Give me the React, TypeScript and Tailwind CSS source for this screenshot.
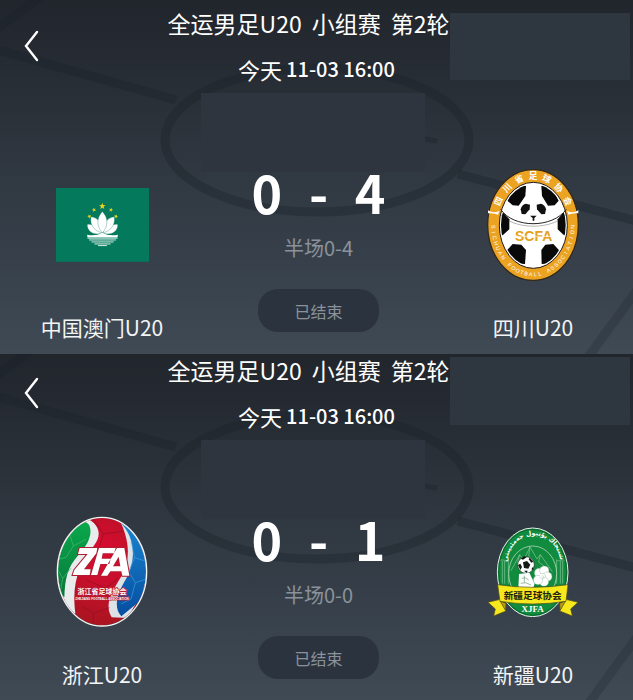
import type { ReactNode } from 'react'

interface Team {
  name: string
  logo: ReactNode
}

interface Match {
  id: string
  home: Team
  away: Team
  score: [number, number]
  half: string
  cropped?: boolean
}

interface RingTextProps {
  text: string
  cx: number
  cy: number
  rx: number
  ry: number
  from: number
  to: number
  size: number
  inward?: boolean
  weight?: number
}

// Places each character on an ellipse, angles in degrees clockwise from the top
function RingText({ text, cx, cy, rx, ry, from, to, size, inward, weight = 400 }: RingTextProps) {
  const chars = [...text]
  return (
    <g fill="#fff" fontSize={size} fontWeight={weight} textAnchor="middle" fontFamily="'Liberation Sans', 'Noto Sans CJK SC', sans-serif">
      {chars.map((char, i) => {
        const deg = from + ((to - from) * i) / (chars.length - 1)
        const rad = (deg * Math.PI) / 180
        const x = cx + rx * Math.sin(rad)
        const y = cy - ry * Math.cos(rad)
        const tilt = (Math.atan2(Math.sin(rad) / rx, Math.cos(rad) / ry) * 180) / Math.PI + (inward ? 180 : 0)
        return (
          <text key={i} transform={`translate(${x} ${y}) rotate(${tilt})`} y={size * 0.36}>
            {char}
          </text>
        )
      })}
    </g>
  )
}

function MacauFlag() {
  const star = 'M0 -9 L2.2 -3 L8.6 -2.8 L3.5 1.2 L5.3 7.3 L0 3.8 L-5.3 7.3 L-3.5 1.2 L-8.6 -2.8 L-2.2 -3Z'
  return (
    <svg viewBox="18 23 281 223" className="w-[93px]" role="img" aria-label="中国澳门">
      <rect x="18" y="23" width="281" height="223" fill="#04795c" />
      <g fill="#e8d21d">
        <path d={star} transform="translate(158 78) scale(1.15)" />
        <path d={star} transform="translate(133 89) rotate(-20) scale(.75)" />
        <path d={star} transform="translate(184 89) rotate(20) scale(.75)" />
        <path d={star} transform="translate(119 109) rotate(-30) scale(.75)" />
        <path d={star} transform="translate(199 109) rotate(30) scale(.75)" />
      </g>
      <g fill="#fff" stroke="#04795c" strokeWidth="1">
        <path d="M112 134 C122 129 142 137 157 159 C139 166 114 161 112 134Z" />
        <path d="M205 134 C195 129 175 137 160 159 C178 166 203 161 205 134Z" />
        <path d="M124 110 C146 112 158 131 157 159 C131 151 119 132 124 110Z" />
        <path d="M194 110 C172 112 160 131 160 159 C186 151 198 132 194 110Z" />
        <path d="M158 94 C178 115 175 139 158 159 C141 139 139 115 158 94Z" />
      </g>
      <path d="M112 164 Q136 170 158 158 Q180 170 205 164 L204 171 H113Z" fill="#fff" />
      <g stroke="#d4eee5" fill="none">
        <path d="M113 174 H204" strokeWidth="4" />
        <path d="M118 180 H199" strokeWidth="3" />
        <path d="M125 186 H192" strokeWidth="3" />
        <path d="M134 192 H183" strokeWidth="3" />
        <path d="M145 197 H172" strokeWidth="3" />
      </g>
    </svg>
  )
}

function SichuanBadge() {
  return (
    <svg viewBox="20 24 282 342" className="w-[94px]" role="img" aria-label="四川省足球协会">
      <defs>
        <clipPath id="scfa-ball">
          <ellipse cx="162" cy="196" rx="97" ry="124" />
        </clipPath>
      </defs>
      <ellipse cx="161" cy="195" rx="136" ry="166" fill="#eca322" stroke="#33291a" strokeWidth="4" />
      <ellipse cx="162" cy="196" rx="102" ry="129" fill="#fff" stroke="#201c1c" strokeWidth="3" />
      <g clipPath="url(#scfa-ball)" fill="#090909">
        <path d="M84 122 L109 76 L140 78 L138 108 L118 137 L100 136Z" />
        <path d="M238 122 L214 76 L186 78 L188 108 L206 137 L226 136Z" />
        <path d="M56 166 L72 158 L90 178 L90 208 L70 226 L58 226Z" />
        <path d="M268 166 L252 158 L235 178 L235 208 L254 226 L268 226Z" />
        <path d="M80 274 L100 252 L126 254 L140 270 L137 312 L100 310Z" />
        <path d="M242 274 L222 252 L198 254 L186 270 L187 312 L224 310Z" />
      </g>
      <g fill="none" stroke="#252222" strokeWidth="3">
        <path d="M64 148 C102 205 219 206 261 148" />
        <path d="M61 160 C99 211 223 212 264 160" strokeWidth="1" />
      </g>
      <path d="M26 151 Q44 162 60 152 L56 164 Q44 158 26 160Z M297 151 Q279 162 263 152 L267 164 Q279 158 297 160Z" fill="#fff" />
      <g fill="#111">
        <path d="M124 148 Q127 134 139 131 L152 134 L151 148 L138 163 L127 162Z" />
        <path d="M200 148 Q197 134 185 131 L172 134 L173 148 L186 163 L197 162Z" />
        <path d="M152 167 H172 L165 174 V182 H160 V174Z" />
      </g>
      <text x="163" y="242" textAnchor="middle" fill="#e7a01d" fontSize="42" fontWeight="700" fontFamily="'Liberation Sans', sans-serif">
        SCFA
      </text>
      <path d="M104 229 H222" stroke="#fff" strokeWidth="2" />
      <RingText text="四川省足球协会" cx={161} cy={195} rx={119} ry={147} from={-61} to={61} size={26} weight={700} />
      <RingText text="SICHUAN FOOTBALL ASSOCIATION" cx={161} cy={195} rx={119} ry={148} from={268} to={92} size={16} inward />
    </svg>
  )
}

function ZhejiangBadge() {
  return (
    <svg viewBox="20 18 276 334" className="w-[92px]" role="img" aria-label="浙江省足球协会">
      <defs>
        <clipPath id="zfa-ball">
          <ellipse cx="158" cy="185" rx="132" ry="161" />
        </clipPath>
        <radialGradient id="zfa-red" cx=".5" cy=".35" r=".65">
          <stop offset="0" stopColor="#dd0b33" />
          <stop offset="1" stopColor="#a81520" />
        </radialGradient>
        <linearGradient id="zfa-green" x1="0" y1="0" x2="0" y2="1">
          <stop offset="0" stopColor="#09a94b" />
          <stop offset="1" stopColor="#08773c" />
        </linearGradient>
        <linearGradient id="zfa-blue" x1="0" y1="0" x2="0" y2="1">
          <stop offset="0" stopColor="#1a86d0" />
          <stop offset="1" stopColor="#064da0" />
        </linearGradient>
      </defs>
      <g clipPath="url(#zfa-ball)">
        <rect x="20" y="18" width="276" height="334" fill="url(#zfa-red)" />
        <path d="M20 18 H100 C150 40 161 72 133 108 C91 164 66 214 78 310 L20 350Z" fill="#e9ecec" />
        <path d="M20 60 C60 40 103 24 119 44 C132 72 115 105 88 134 C54 172 47 205 45 262 L20 240Z" fill="url(#zfa-green)" />
        <path d="M211 30 C235 82 247 133 221 190 C197 235 160 277 187 322 L235 324 L300 210 V70Z" fill="#dde2e7" />
        <path d="M210 34 C262 86 259 153 230 207 C205 249 190 291 216 319 L300 250 V60Z" fill="url(#zfa-blue)" />
        <path d="M60 70 L72 108 L110 88 M72 108 L50 142 L26 148 M26 180 L40 205 L65 175 M40 205 L34 240" fill="none" stroke="#4fba70" strokeWidth="2" />
        <path d="M133 29 L162 72 L220 64 M162 72 L150 110 M112 210 L170 235 L205 205 M98 288 L132 310 L180 293 M132 310 V347" fill="none" stroke="#8f1024" strokeWidth="2" />
        <path d="M246 96 L256 143 L294 155 M256 143 L238 185 L258 218 L292 207 M258 218 L245 267 L215 282" fill="none" stroke="#3f9fdb" strokeWidth="2" />
      </g>
      <ellipse cx="158" cy="185" rx="134" ry="163" fill="none" stroke="#f5f5f5" strokeWidth="4" />
      <path d="M91 114 H144 L141 130 L104 178 H124 L121 195 H70 L75 180 L115 132 H86Z M149 114 H199 L194 130 H160 L157 146 H184 L180 162 H153 L144 195 H125Z M203 114 H225 L240 197 H219 L216 184 H183 L174 197 H155Z M208 140 L191 169 H213Z" fill="#fff" fillRule="evenodd" stroke="#b11c32" strokeWidth="6" paintOrder="stroke" />
      <text x="158" y="253" textAnchor="middle" fill="#fff" stroke="#b81a30" strokeWidth="4" paintOrder="stroke" fontSize="21" fontWeight="700" fontFamily="'Noto Sans CJK SC', sans-serif">
        浙江省足球协会
      </text>
      <text x="158" y="271" textAnchor="middle" fill="#fff" stroke="#b81a30" strokeWidth="3" paintOrder="stroke" fontSize="9" fontWeight="700" fontFamily="'Liberation Sans', sans-serif">
        ZHEJIANG FOOTBALL ASSOCIATION
      </text>
    </svg>
  )
}

function XinjiangBadge() {
  return (
    <svg viewBox="26 20 276 272" className="w-[92px]" role="img" aria-label="新疆足球协会">
      <defs>
        <path id="xjfa-arc" d="M86 128 C96 20 230 16 246 122" />
      </defs>
      <ellipse cx="163" cy="156" rx="106" ry="133" fill="#118b3d" stroke="#e9eee9" strokeWidth="3" />
      <ellipse cx="163" cy="156" rx="102" ry="129" fill="none" stroke="#0a5127" strokeWidth="2" />
      <g fill="none" stroke="#8dcba0" strokeWidth="2">
        <path d="M66 120 C76 115 85 127 90 118 V190 M72 122 V190 M79 122 V190 M258 120 C248 115 242 127 235 118 V190 M253 122 V190 M246 122 V190" />
        <ellipse cx="163" cy="160" rx="72" ry="83" fill="#118b3d" stroke="#d3e7d8" />
      </g>
      <path d="M98 151 L124 103 L136 119 L155 80 L176 116 L186 103 L222 154 M155 80 L151 107 L164 122 M186 103 L181 125 L199 139 M124 103 L117 130" fill="none" stroke="#8cc59c" strokeWidth="2" />
      <g fill="#fff">
        <text fontSize="19" fontWeight="700" fontFamily="'DejaVu Sans', sans-serif" textAnchor="middle">
          <textPath href="#xjfa-arc" startOffset="50%">شىنجاڭ پۇتبول جەمئىيىتى</textPath>
        </text>
        <circle cx="143" cy="134" r="25" stroke="#1b2c20" strokeWidth="2" />
        <path d="M122 161 L153 157 L169 190 L163 207 H120Z" />
      </g>
      <g fill="#121b16">
        <path d="M134 126 L146 122 L156 133 L150 145 L137 143Z" />
        <path d="M127 115 L138 108 L145 111 L134 118Z M154 112 L165 124 L159 127 L151 117Z M119 134 L126 130 L131 140 L126 149Z M159 147 L165 138 L165 149Z M137 151 L148 151 L145 158Z" />
      </g>
      <g fill="#fff" stroke="#6d9c79" strokeWidth="1">
        <circle cx="182" cy="158" r="14" />
        <circle cx="198" cy="151" r="14" />
        <circle cx="207" cy="169" r="14" />
        <circle cx="197" cy="184" r="14" />
        <circle cx="179" cy="179" r="14" />
        <path d="M187 161 Q199 154 202 169 Q192 180 184 170 M190 168 Q197 163 195 173" />
        <path d="M138 166 V187 M130 174 Q142 169 151 179 M127 189 Q142 183 158 194" fill="none" strokeWidth="2" />
      </g>
      <g fill="#f7e71d" stroke="#514c18" strokeWidth="2">
        <path d="M29 246 L66 237 L83 272 L46 287 L51 266Z" />
        <path d="M299 246 L262 237 L244 272 L282 287 L277 266Z" />
        <path d="M65 242 L83 249 L82 271Z M262 242 L244 249 L245 271Z" fill="#b99d0f" />
        <path d="M58 193 Q163 209 269 193 L263 243 Q163 259 65 243Z" />
      </g>
      <text x="163" y="237" textAnchor="middle" fill="#202010" fontSize="29" fontWeight="700" fontFamily="'Noto Sans CJK SC', sans-serif">
        新疆足球协会
      </text>
      <text x="163" y="274" textAnchor="middle" fill="#fff" fontSize="27" fontWeight="700" fontFamily="'Liberation Serif', serif">
        XJFA
      </text>
    </svg>
  )
}

const matches: Match[] = [
  {
    id: 'macau-sichuan',
    home: { name: '中国澳门U20', logo: <MacauFlag /> },
    away: { name: '四川U20', logo: <SichuanBadge /> },
    score: [0, 4],
    half: '0-4',
  },
  {
    id: 'zhejiang-xinjiang',
    home: { name: '浙江U20', logo: <ZhejiangBadge /> },
    away: { name: '新疆U20', logo: <XinjiangBadge /> },
    score: [0, 1],
    half: '0-0',
    cropped: true,
  },
]

// Faded pitch markings behind the scoreboard
function Pitch({ cropped }: { cropped?: boolean }) {
  return (
    <svg
      viewBox={cropped ? '0 7 633 346' : '0 0 633 354'}
      preserveAspectRatio="none"
      className="absolute inset-0 h-full w-full"
      aria-hidden="true"
    >
      <g fill="none" stroke="#1b222a" strokeOpacity=".38" strokeWidth="9">
        <ellipse cx="317" cy="140" rx="152" ry="72" />
        <path d="M-5 49 L176 100" />
        <path d="M458 174 L640 222" />
        <path d="M-5 30 L42 -5" />
        <path d="M640 286 L586 360" strokeOpacity=".25" />
        <path d="M424 139 L437 141" strokeWidth="5" />
      </g>
      <rect x="201" y="93" width="224" height="79" fill="#2e353f" />
      <rect x="450" y={cropped ? 10 : 13} width="180" height={cropped ? 68 : 67} fill="#2e363f" />
    </svg>
  )
}

function TeamColumn({ team }: { team: Team }) {
  return (
    <div className="flex flex-col items-center">
      <div className="flex h-[114px] items-center">{team.logo}</div>
      <h2 className="mt-[29px] mb-px text-[21px] leading-8 whitespace-nowrap text-gray-100">{team.name}</h2>
    </div>
  )
}

function MatchPanel({ match }: { match: Match }) {
  return (
    <section
      className={`relative bg-linear-to-b from-[#21252c] via-[#303841] to-[#3f4a55] ${match.cropped ? 'pb-[9px]' : 'pt-[7px] pb-[10px]'}`}
    >
      <Pitch cropped={match.cropped} />
      <div className="relative">
        <header className="grid items-center text-white">
          <button type="button" aria-label="返回" className="col-start-1 row-start-1 ml-6 justify-self-start">
            <svg viewBox="0 0 15 32" className="h-8 w-[15px]" fill="none" stroke="currentColor" strokeWidth="2.4" strokeLinecap="round">
              <path d="M13 2 L2 16 L13 30" />
            </svg>
          </button>
          <div className="col-start-1 row-start-1 flex flex-col items-center justify-self-center whitespace-nowrap">
            <h1 className="flex gap-2.5 pr-4 text-[23px] leading-8">
              <span>全运男足U20</span>
              <span>小组赛</span>
              <span>第2轮</span>
            </h1>
            <p className="mt-3.5 flex gap-1 text-[22px] leading-8">
              今天
              <span className="text-[20px] font-medium">11-03 16:00</span>
            </p>
          </div>
        </header>

        <div className="grid grid-cols-[204fr_229fr_200fr] pt-[83px]">
          <TeamColumn team={match.home} />
          <div className="flex flex-col items-center">
            <div className="flex w-[134px] justify-between text-[52px] leading-[48px] font-bold text-white">
              <span>{match.score[0]}</span>
              <span>-</span>
              <span>{match.score[1]}</span>
            </div>
            <p className="mt-4 text-[20px] leading-8 text-[#8b929b]">半场{match.half}</p>
            <div className="mt-[25px] flex h-[43px] w-[121px] items-center justify-center rounded-[20px] bg-[#2b343e] text-[16px] text-[#8b929b]">
              已结束
            </div>
          </div>
          <TeamColumn team={match.away} />
        </div>
      </div>
    </section>
  )
}

export default function App() {
  return (
    <main lang="zh-CN" className="min-h-screen overflow-hidden bg-[#3f4a55] font-['Noto_Sans_CJK_SC',sans-serif]">
      {matches.map((match) => (
        <MatchPanel key={match.id} match={match} />
      ))}
    </main>
  )
}
